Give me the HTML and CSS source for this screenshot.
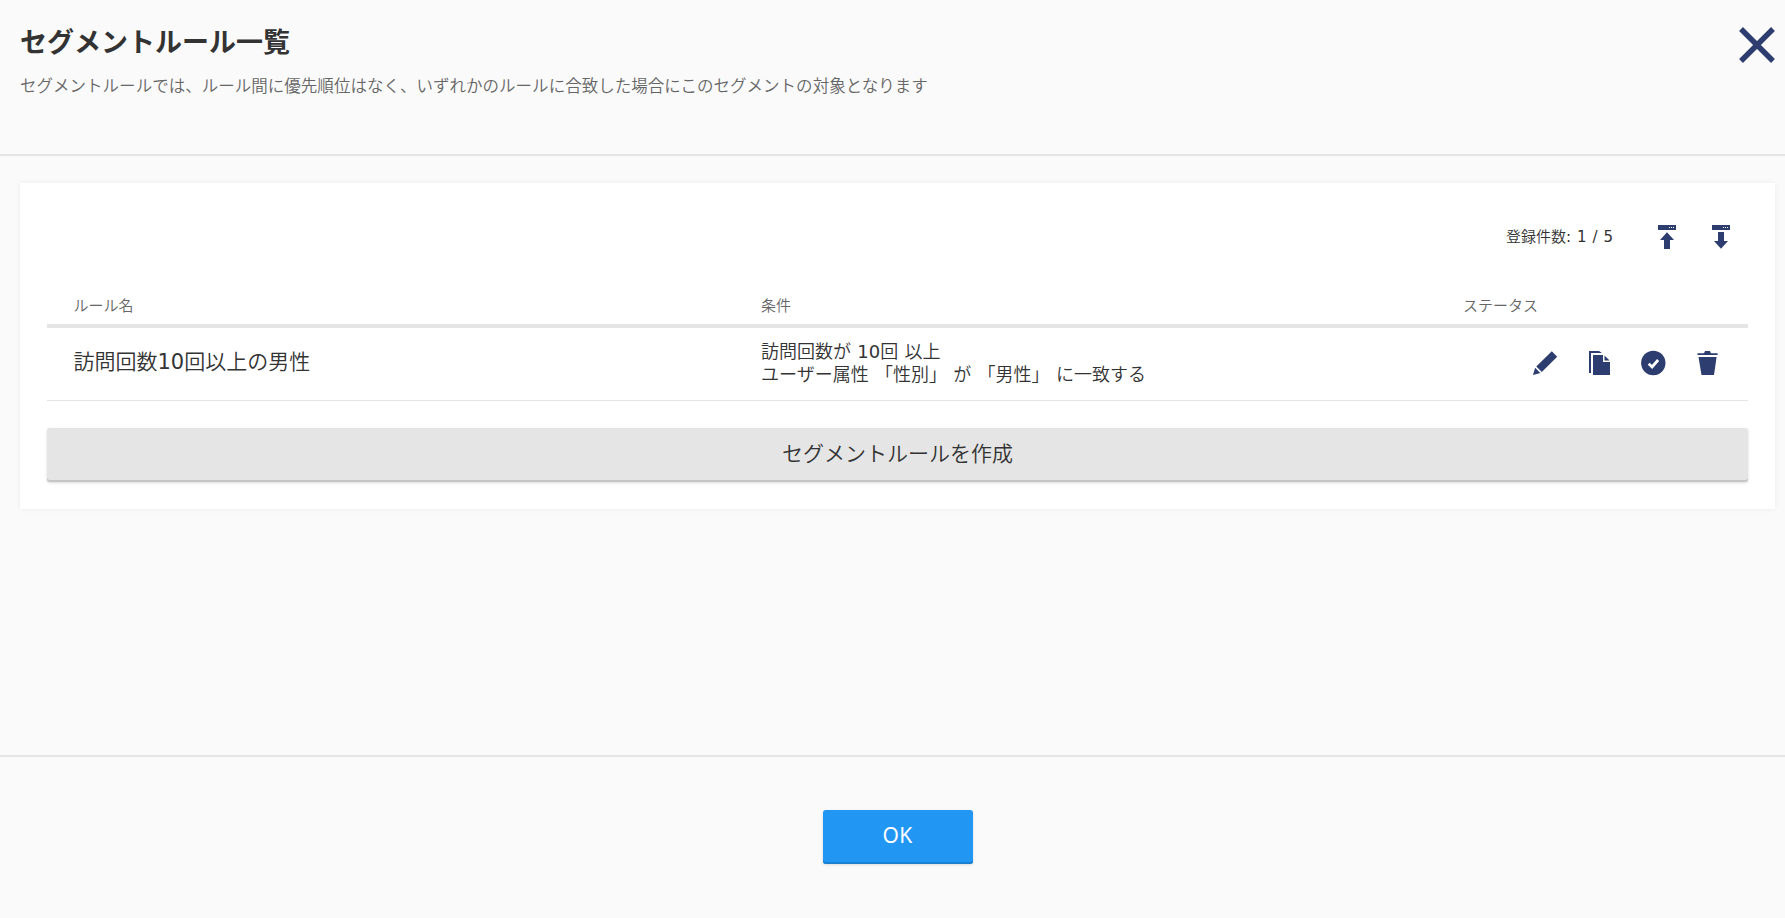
FILE: index.html
```html
<!DOCTYPE html>
<html lang="ja">
<head>
<meta charset="utf-8">
<title>セグメントルール一覧</title>
<link rel="stylesheet" href="styles.css">
</head>
<body>
<div class="modal">
  <header class="modal-header">
    <div class="heading">
      <h1 class="title">セグメントルール一覧</h1>
      <p class="lead">セグメントルールでは、ルール間に優先順位はなく、いずれかのルールに合致した場合にこのセグメントの対象となります</p>
    </div>
    <svg class="close" viewBox="0 0 36 36"><path d="M2 2 34 34M34 2 2 34"/></svg>
  </header>
  <main class="modal-body">
    <section class="card">
      <div class="toolbar">
        <span class="count">登録件数: 1 / 5</span>
        <svg class="icon" viewBox="0 0 24 24"><path fill-rule="evenodd" d="M3 0h18v5H3zM14 2v1h1V2zM16 2v1h1V2zM18 2v1h1V2z"/><path d="M12 7.2 19 15h-4v9H9v-9H5z"/></svg>
        <svg class="icon" viewBox="0 0 24 24"><path fill-rule="evenodd" d="M3 0h18v5H3zM14 2v1h1V2zM16 2v1h1V2zM18 2v1h1V2z"/><path d="M9 7h6v9h4l-7 7.8L5 16h4z"/></svg>
      </div>
      <div class="row head">
        <span>ルール名</span><span>条件</span><span class="status">ステータス</span>
      </div>
      <div class="row item">
        <span class="name">訪問回数10回以上の男性</span>
        <span class="condition">訪問回数が 10回 以上<br>ユーザー属性 「性別」 が 「男性」 に一致する</span>
        <span class="actions">
          <svg class="icon" viewBox="0 0 24 24"><path d="M18.8.2 24.2 5.8 8.8 21 3.3 15.500z"/><path d="M2.100 16.700 7.400 22 0 24z"/></svg>
          <svg class="icon" viewBox="0 0 24 24"><path d="M2 0h10l3 2H4v20H2z"/><path d="M6 4h10v7h7v13H6z"/><path d="M17.500 4.500 22.600 9.500H17.500z"/></svg>
          <svg class="icon" viewBox="0 0 24 24"><circle cx="12.300" cy="12" r="12.200"/><path class="check" d="m7.700 12.800 3.400 3.200 6-7"/></svg>
          <svg class="icon" viewBox="0 0 24 24"><path d="M2.500 2.200H9L10 0h5l1 2.200h6.600v1.800H2.500zM3.500 6h18.100L19 24H6.500z"/></svg>
        </span>
      </div>
      <button class="button create">セグメントルールを作成</button>
    </section>
  </main>
  <footer class="modal-footer">
    <button class="button ok">OK</button>
  </footer>
</div>
</body>
</html>
```
FILE: styles.css
```css
* { box-sizing: border-box; }

body {
  margin: 0;
  background: #fafafa;
  color: #333;
  font-family: "DejaVu Sans", "Noto Sans CJK JP DemiLight", "Noto Sans CJK JP", sans-serif;
  font-weight: 400;
}

.modal {
  display: flex;
  flex-direction: column;
  height: 918px;
  overflow: hidden;
}

.modal-header {
  display: flex;
  justify-content: space-between;
  height: 156px;
  padding: 20px 10px 0 20px;
  border-bottom: 2px solid #e5e5e5;
}

.title {
  margin: 0;
  font-size: 27px;
  line-height: 42px;
  font-weight: 700;
  font-family: "Noto Sans CJK JP", sans-serif;
}

.lead {
  margin: 10px 0 0;
  font-size: 16.5px;
  line-height: 26px;
  letter-spacing: .02px;
  color: #666;
  font-family: "Noto Sans CJK JP", sans-serif;
  font-weight: 350;
}

.close {
  width: 36px;
  height: 36px;
  margin-top: 7px;
  fill: none;
  stroke: #2d3d70;
  stroke-width: 5.4;
}

.modal-body {
  flex: 1;
  padding: 27px 10px 0 20px;
}

.card {
  height: 326px;
  padding: 27px;
  background: #fff;
  box-shadow: 0 0 6px rgba(0, 0, 0, .06);
}

.toolbar {
  display: flex;
  justify-content: flex-end;
  align-items: center;
  gap: 30px;
  height: 54px;
  padding-right: 15px;
}

.count {
  margin: 0 12px 3px 0;
  font-size: 15px;
  word-spacing: 1.2px;
}

.icon {
  display: block;
  width: 24px;
  height: 24px;
  overflow: visible;
  fill: #2d3d70;
}

.check {
  fill: none;
  stroke: #fff;
  stroke-width: 2.8;
}

.row {
  display: grid;
  grid-template-columns: 687.5px 702px 1fr;
  padding-left: 26.5px;
}

.head {
  height: 64px;
  padding-top: 31px;
  border-bottom: 4px solid #e5e5e5;
  font-size: 15px;
  line-height: 22px;
  color: #666;
}

.item {
  height: 73px;
  padding-top: 12px;
  border-bottom: 1px solid #e5e5e5;
}

.name {
  font-size: 21px;
  line-height: 44px;
}

.condition {
  font-size: 18px;
  line-height: 23px;
  word-spacing: .6px;
}

.actions {
  display: flex;
  justify-content: flex-end;
  gap: 30px;
  padding: 11px 29px 0 0;
}

.button {
  display: block;
  height: 54px;
  padding: 0 0 4px;
  border: 0;
  border-radius: 3px;
  font: 400 21px/50px "Noto Sans", "Noto Sans CJK JP", sans-serif;
}

.create {
  width: 100%;
  margin-top: 27px;
  padding-bottom: 6px;
  background: #e5e5e5;
  color: #333;
  font-family: "Noto Sans CJK JP", sans-serif;
  font-weight: 350;
  line-height: 46px;
  box-shadow: inset 0 -2px #c5c5c5, 0 1px 3px rgba(0, 0, 0, .15);
}

.modal-footer {
  display: flex;
  justify-content: center;
  height: 163px;
  padding: 53px 0 0 11px;
  border-top: 2px solid #e5e5e5;
}

.ok {
  width: 150px;
  padding-right: 1px;
  background: #2196f3;
  color: #fff;
  letter-spacing: .3px;
  box-shadow: inset 0 -2px #1c80cf, 0 1px 3px rgba(0, 0, 0, .12);
}
```
